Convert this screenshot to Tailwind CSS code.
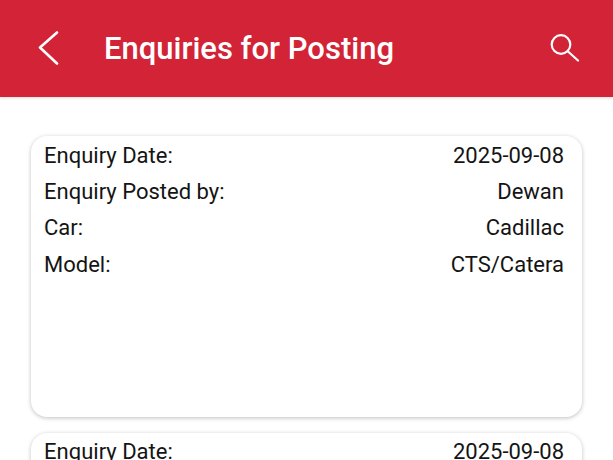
<!DOCTYPE html>
<html>
<head>
  <meta charset="UTF-8">
  <title>Enquiries for Posting</title>
  <meta name="viewport" content="width=device-width, initial-scale=1.0">
  <script src="https://cdn.jsdelivr.net/npm/@tailwindcss/browser@4"></script>
</head>
<body>
  <div class="h-[460px] overflow-hidden bg-white font-['Roboto',sans-serif] text-[#141414]">
    <header class="h-[97px] bg-[#d32336] flex items-center pl-[38px] pr-[33px] shadow-[0_1px_3px_rgba(0,0,0,0.15)]">
      <svg width="22" height="36" viewBox="0 0 22 36" fill="none" stroke="white" stroke-width="2.6" stroke-linecap="round" stroke-linejoin="round"><path d="M19 1.5 2 16.5 19 32.5"/></svg>
      <h1 class="ml-[44px] pt-[2px] text-[31px] font-medium text-white">Enquiries for Posting</h1>
      <svg class="ml-auto" width="30" height="30" viewBox="0 0 30 30" fill="none" stroke="white" stroke-width="2.2" stroke-linecap="round"><circle cx="11" cy="10.5" r="9.3"/><path d="m18 17.5 10 9"/></svg>
    </header>
    <main class="pl-[31px] pr-[31px] pt-[39px] flex flex-col gap-[16px]">
      <section class="h-[281px] rounded-[16px] bg-white shadow-[0_1px_4px_rgba(0,0,0,0.25)] pl-[13px] pr-[18px] pt-[1px] text-[22px]">
        <div class="h-[36.4px] flex items-center justify-between"><span>Enquiry Date:</span><span>2025-09-08</span></div>
        <div class="h-[36.4px] flex items-center justify-between"><span>Enquiry Posted by:</span><span>Dewan</span></div>
        <div class="h-[36.4px] flex items-center justify-between"><span>Car:</span><span>Cadillac</span></div>
        <div class="h-[36.4px] flex items-center justify-between"><span>Model:</span><span>CTS/Catera</span></div>
      </section>
      <section class="h-[281px] rounded-[16px] bg-white shadow-[0_1px_4px_rgba(0,0,0,0.25)] pl-[13px] pr-[18px] text-[22px]">
        <div class="h-[36.4px] flex items-center justify-between"><span>Enquiry Date:</span><span>2025-09-08</span></div>
      </section>
    </main>
  </div>
</body>
</html>
